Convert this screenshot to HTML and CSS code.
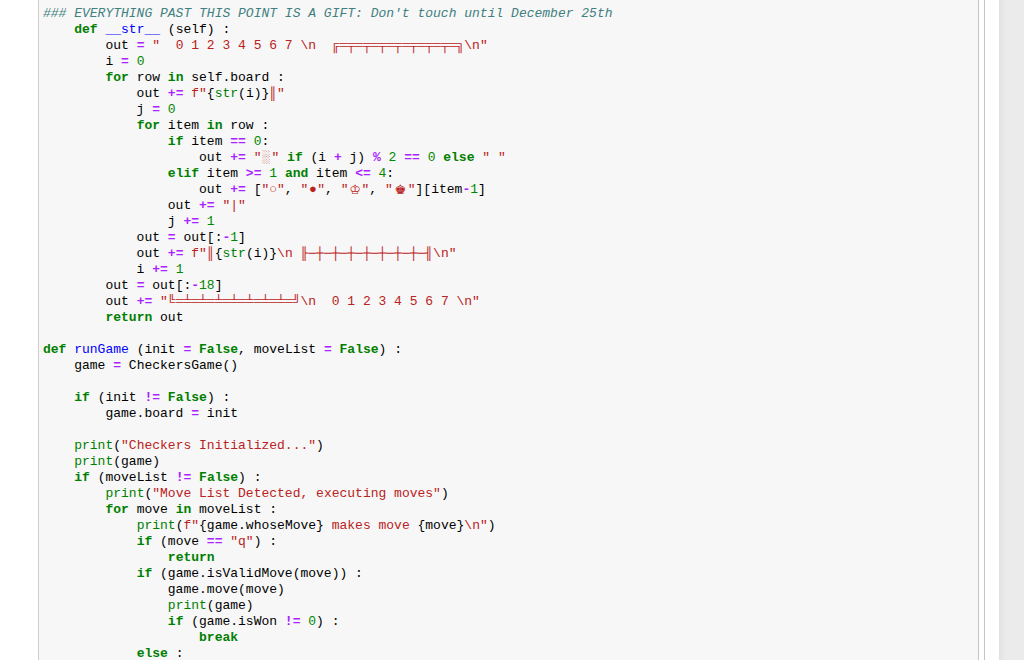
FILE: index.html
```html
<!DOCTYPE html>
<html>
<head>
<meta charset="utf-8">
<link rel="stylesheet" href="styles.css">
</head>
<body>
<div class="page">
  <div class="cell">
<pre class="code"><span class="c">### EVERYTHING PAST THIS POINT IS A GIFT: Don't touch until December 25th</span>
    <span class="k">def</span> <span class="f">__str__</span> (self) :
        out <span class="o">=</span> <span class="s">"  0 1 2 3 4 5 6 7 \n  ╔═╤═╤═╤═╤═╤═╤═╤═╗\n"</span>
        i <span class="o">=</span> <span class="n">0</span>
        <span class="k">for</span> row <span class="k">in</span> self.board :
            out <span class="o">+=</span> <span class="s">f"</span>{<span class="b">str</span>(i)}<span class="s">║"</span>
            j <span class="o">=</span> <span class="n">0</span>
            <span class="k">for</span> item <span class="k">in</span> row :
                <span class="k">if</span> item <span class="o">==</span> <span class="n">0</span>:
                    out <span class="o">+=</span> <span class="s">"<span class="shade">░</span>"</span> <span class="k">if</span> (i <span class="o">+</span> j) <span class="o">%</span> <span class="n">2</span> <span class="o">==</span> <span class="n">0</span> <span class="k">else</span> <span class="s">" "</span>
                <span class="k">elif</span> item <span class="o">&gt;=</span> <span class="n">1</span> <span class="k">and</span> item <span class="o">&lt;=</span> <span class="n">4</span>:
                    out <span class="o">+=</span> [<span class="s">"○"</span>, <span class="s">"<span class="dot">●</span>"</span>, <span class="s">"<span class="king">♔</span>"</span>, <span class="s">"<span class="king wide">♚</span>"</span>][item<span class="o">-</span><span class="n">1</span>]
                out <span class="o">+=</span> <span class="s">"|"</span>
                j <span class="o">+=</span> <span class="n">1</span>
            out <span class="o">=</span> out[:<span class="o">-</span><span class="n">1</span>]
            out <span class="o">+=</span> <span class="s">f"║</span>{<span class="b">str</span>(i)}<span class="s">\n ╟─┼─┼─┼─┼─┼─┼─┼─╢\n"</span>
            i <span class="o">+=</span> <span class="n">1</span>
        out <span class="o">=</span> out[:<span class="o">-</span><span class="n">18</span>]
        out <span class="o">+=</span> <span class="s">"╚═╧═╧═╧═╧═╧═╧═╧═╝\n  0 1 2 3 4 5 6 7 \n"</span>
        <span class="k">return</span> out

<span class="k">def</span> <span class="f">runGame</span> (init <span class="o">=</span> <span class="k">False</span>, moveList <span class="o">=</span> <span class="k">False</span>) :
    game <span class="o">=</span> CheckersGame()

    <span class="k">if</span> (init <span class="o">!=</span> <span class="k">False</span>) :
        game.board <span class="o">=</span> init

    <span class="b">print</span>(<span class="s">"Checkers Initialized..."</span>)
    <span class="b">print</span>(game)
    <span class="k">if</span> (moveList <span class="o">!=</span> <span class="k">False</span>) :
        <span class="b">print</span>(<span class="s">"Move List Detected, executing moves"</span>)
        <span class="k">for</span> move <span class="k">in</span> moveList :
            <span class="b">print</span>(<span class="s">f"</span>{game.whoseMove}<span class="s"> makes move </span>{move}<span class="s">\n"</span>)
            <span class="k">if</span> (move <span class="o">==</span> <span class="s">"q"</span>) :
                <span class="k">return</span>
            <span class="k">if</span> (game.isValidMove(move)) :
                game.move(move)
                <span class="b">print</span>(game)
                <span class="k">if</span> (game.isWon <span class="o">!=</span> <span class="n">0</span>) :
                    <span class="k">break</span>
            <span class="k">else</span> :</pre>
  </div>
  <div class="gap"></div>
  <div class="edge"></div>
  <div class="scroll"></div>
</div>
</body>
</html>
```

FILE: styles.css
```css
html, body {
  margin: 0;
  padding: 0;
  background: #ffffff;
  overflow: hidden;
}

.page {
  display: flex;
  height: 660px;
  overflow: hidden;
}

.cell {
  margin-left: 38px;
  width: 941px;
  flex: none;
  background: #f7f7f7;
  border-left: 1px solid #cfcfcf;
  border-right: 1px solid #c4c4c4;
  padding: 6px 0 0 4px;
  box-sizing: border-box;
  overflow: hidden;
}

.code {
  margin: 0;
  font-family: "Liberation Mono", "DejaVu Sans Mono", monospace;
  font-size: 13px;
  line-height: 16px;
  color: #000000;
  white-space: pre;
}

.c { color: #408080; font-style: italic; }
.k { color: #008000; font-weight: bold; }
.f { color: #0000ff; }
.o { color: #aa22ff; font-weight: bold; }
.n { color: #008800; }
.s { color: #ba2121; }
.b { color: #008000; }

.shade {
  display: inline-block;
  width: 10px;
  text-align: center;
  line-height: 16px;
}

.dot {
  display: inline-block;
  width: 9px;
  text-align: center;
  line-height: 16px;
}

.king {
  display: inline-block;
  width: 13px;
  text-align: center;
  font-family: "DejaVu Sans", sans-serif;
  font-size: 13px;
  line-height: 16px;
  vertical-align: top;
}

.wide {
  width: 15px;
}

.gap {
  width: 5px;
  flex: none;
}

.edge {
  width: 15px;
  flex: none;
  border-left: 1px solid #c4c4c4;
  box-sizing: border-box;
}

.scroll {
  flex: 1;
  background: linear-gradient(to right, #e1e1e1, #ebebeb 6px, #ebebeb);
}
```
